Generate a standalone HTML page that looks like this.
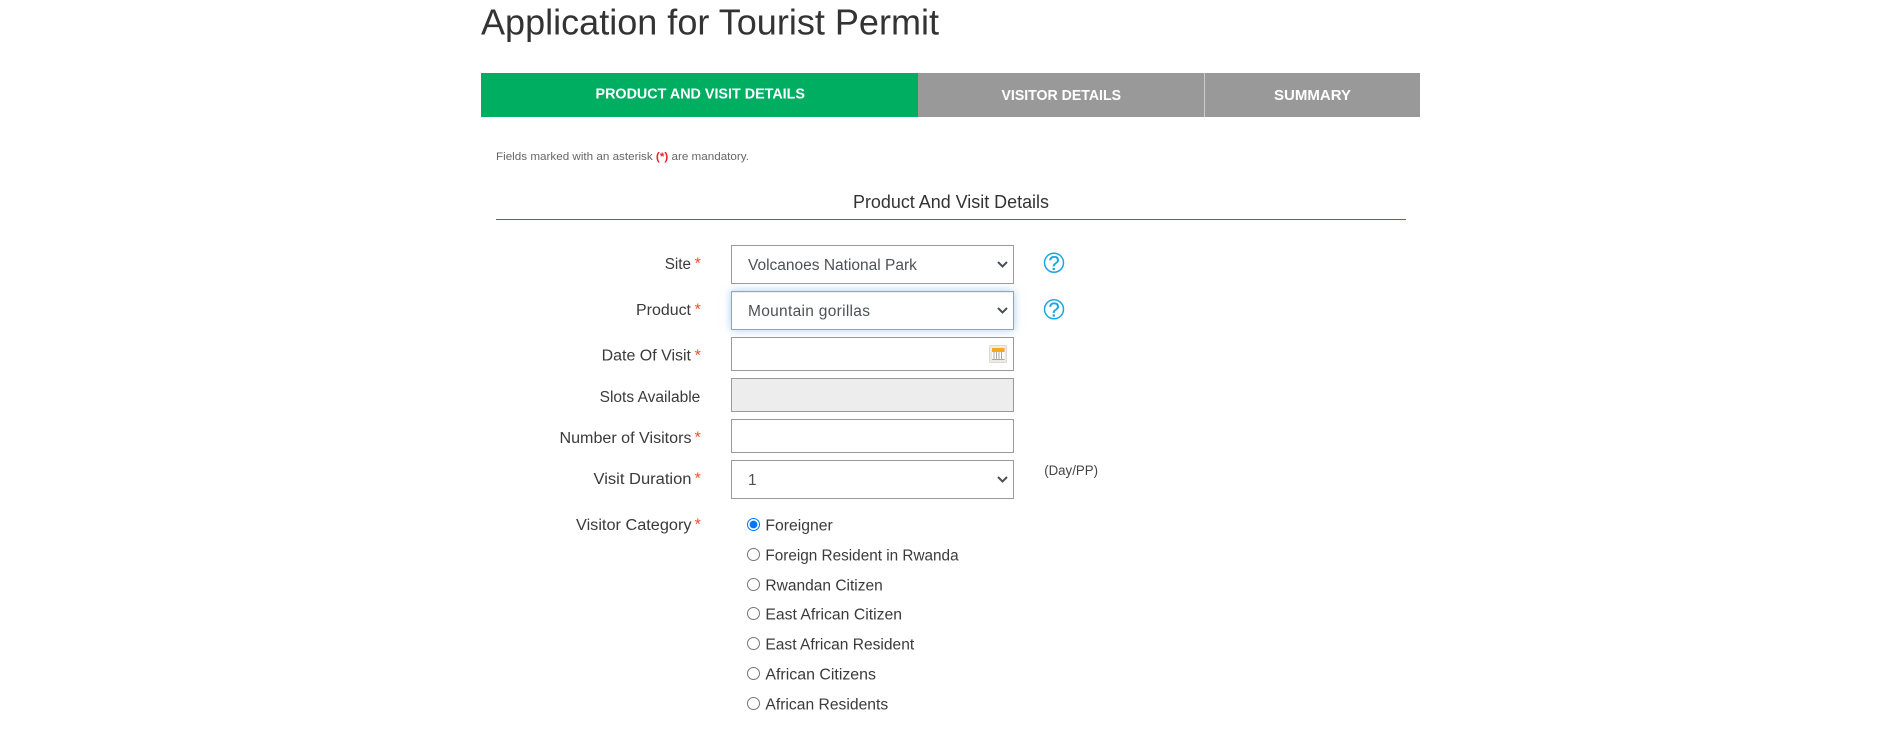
<!DOCTYPE html>
<html lang="en">
<head>
<meta charset="utf-8">
<title>Application for Tourist Permit</title>
<style>
html,body{margin:0;padding:0;width:1899px;height:740px;overflow:hidden;background:#fff;}
body{position:relative;font-family:"Liberation Sans",sans-serif;color:#333;}
.tab{position:absolute;top:73px;height:44px;}
select,input[type=text]{position:absolute;left:731px;width:283px;box-sizing:border-box;border:1px solid #9a9a9a;border-radius:0;background:#fff;margin:0;outline:0;font-family:"Liberation Sans",sans-serif;font-size:15.5px;color:#4d5157;}
select{padding:2px 0 0 16px;appearance:none;-webkit-appearance:none;}
input[type=radio]{position:absolute;left:747px;width:13px;height:13px;margin:0;}
svg.t{position:absolute;left:0;top:0;pointer-events:none;}
</style>
</head>
<body>
<div class="tab" style="left:481px;width:437px;background:#00ae61"></div>
<div class="tab" style="left:918px;width:286px;background:#999"></div>
<div class="tab" style="left:1204px;width:1px;background:#ccc"></div>
<div class="tab" style="left:1205px;width:215px;background:#999"></div>
<div style="position:absolute;left:496px;top:219px;width:910px;height:1px;background:#1c7cb5"></div>

<select style="top:245px;height:39px;letter-spacing:0"><option>Volcanoes National Park</option></select>
<select style="top:291px;height:39px;letter-spacing:.3px;box-shadow:0 0 8px rgba(102,175,233,.6),inset 0 1px 1px rgba(0,0,0,.075);border-color:#98a4ae"><option>Mountain gorillas</option></select>
<input type="text" style="top:337px;height:34px">
<input type="text" disabled style="top:378px;height:34px;background:#ededed">
<input type="text" style="top:419px;height:34px">
<select style="top:460px;height:39px"><option>1</option></select>

<input type="radio" name="c" checked style="top:518px">
<input type="radio" name="c" style="top:548px">
<input type="radio" name="c" style="top:578px">
<input type="radio" name="c" style="top:607px">
<input type="radio" name="c" style="top:637px">
<input type="radio" name="c" style="top:667px">
<input type="radio" name="c" style="top:697px">

<svg class="t" width="1899" height="740" viewBox="0 0 1899 740" xmlns="http://www.w3.org/2000/svg" font-family="'Liberation Sans',sans-serif">
  <text x="481" y="34.5" font-size="36" fill="#333" textLength="458" lengthAdjust="spacingAndGlyphs">Application for Tourist Permit</text>
  <g font-size="14.5" font-weight="700" fill="#fff">
    <text x="595.5" y="98.5" textLength="209.5" lengthAdjust="spacingAndGlyphs">PRODUCT AND VISIT DETAILS</text>
    <text x="1001.5" y="100" textLength="119.5" lengthAdjust="spacingAndGlyphs">VISITOR DETAILS</text>
    <text x="1274" y="100" textLength="77" lengthAdjust="spacingAndGlyphs">SUMMARY</text>
  </g>
  <text x="496" y="160" font-size="11" fill="#666" textLength="253" lengthAdjust="spacingAndGlyphs">Fields marked with an asterisk <tspan fill="#e8212b" font-weight="700">(*)</tspan> are mandatory.</text>
  <text x="853" y="208" font-size="18" fill="#333" textLength="196" lengthAdjust="spacingAndGlyphs">Product And Visit Details</text>

  <g font-size="15.5" fill="#3a3a3a">
    <text x="664.7" y="269" textLength="26.3" lengthAdjust="spacingAndGlyphs">Site</text>
    <text x="636" y="315" textLength="55" lengthAdjust="spacingAndGlyphs">Product</text>
    <text x="601.6" y="360.5" textLength="89.4" lengthAdjust="spacingAndGlyphs">Date Of Visit</text>
    <text x="599.6" y="402" textLength="100.7" lengthAdjust="spacingAndGlyphs">Slots Available</text>
    <text x="559.5" y="443" textLength="132" lengthAdjust="spacingAndGlyphs">Number of Visitors</text>
    <text x="593.5" y="484" textLength="98" lengthAdjust="spacingAndGlyphs">Visit Duration</text>
    <text x="576" y="530" textLength="115.5" lengthAdjust="spacingAndGlyphs">Visitor Category</text>

    <text x="765.4" y="530.5" textLength="67.3" lengthAdjust="spacingAndGlyphs">Foreigner</text>
    <text x="765.4" y="560.5" textLength="193.2" lengthAdjust="spacingAndGlyphs">Foreign Resident in Rwanda</text>
    <text x="765.4" y="590.5" textLength="117.4" lengthAdjust="spacingAndGlyphs">Rwandan Citizen</text>
    <text x="765.4" y="619.5" textLength="136.6" lengthAdjust="spacingAndGlyphs">East African Citizen</text>
    <text x="765.4" y="649.5" textLength="148.8" lengthAdjust="spacingAndGlyphs">East African Resident</text>
    <text x="765.4" y="679.5" textLength="110.6" lengthAdjust="spacingAndGlyphs">African Citizens</text>
    <text x="765.4" y="709.5" textLength="122.8" lengthAdjust="spacingAndGlyphs">African Residents</text>
  </g>
  <g font-size="16" fill="#f0492a">
    <text x="694.6" y="268.7">*</text>
    <text x="694.6" y="314.7">*</text>
    <text x="694.6" y="360.7">*</text>
    <text x="694.6" y="442.7">*</text>
    <text x="694.6" y="483.7">*</text>
    <text x="694.6" y="529.7">*</text>
  </g>
  <text x="1044.2" y="475" font-size="13.5" fill="#444" textLength="53.8" lengthAdjust="spacingAndGlyphs">(Day/PP)</text>

  <g fill="none" stroke="#4a5058" stroke-width="2">
    <path d="M998 262l4.5 4.5 4.5-4.5"/>
    <path d="M998 308l4.5 4.5 4.5-4.5"/>
    <path d="M998 477l4.5 4.5 4.5-4.5"/>
  </g>

  <g fill="none" stroke="#1aa7e0" stroke-width="1.5">
    <circle cx="1054" cy="262.7" r="9.5"/>
    <circle cx="1054" cy="309.3" r="9.5"/>
  </g>
  <g font-size="20" fill="#1aa7e0" stroke="#1aa7e0" stroke-width=".3" text-anchor="middle">
    <text x="1054" y="270">?</text>
    <text x="1054" y="316.6">?</text>
  </g>

  <g>
    <rect x="989.5" y="345.5" width="17" height="17" rx="1" fill="#eeebe4" stroke="#dedbd3"/>
    <rect x="992" y="348" width="12.5" height="4" fill="#f7a823"/>
    <rect x="992" y="352" width="12.5" height="7.5" fill="#fff"/>
    <path d="M994 352v7.5M996.5 352v7.5M999 352v7.5M1001.5 352v7.5M992 359.5h12.5" stroke="#a8a8a8" stroke-width="1" fill="none"/>
  </g>
</svg>
</body>
</html>
